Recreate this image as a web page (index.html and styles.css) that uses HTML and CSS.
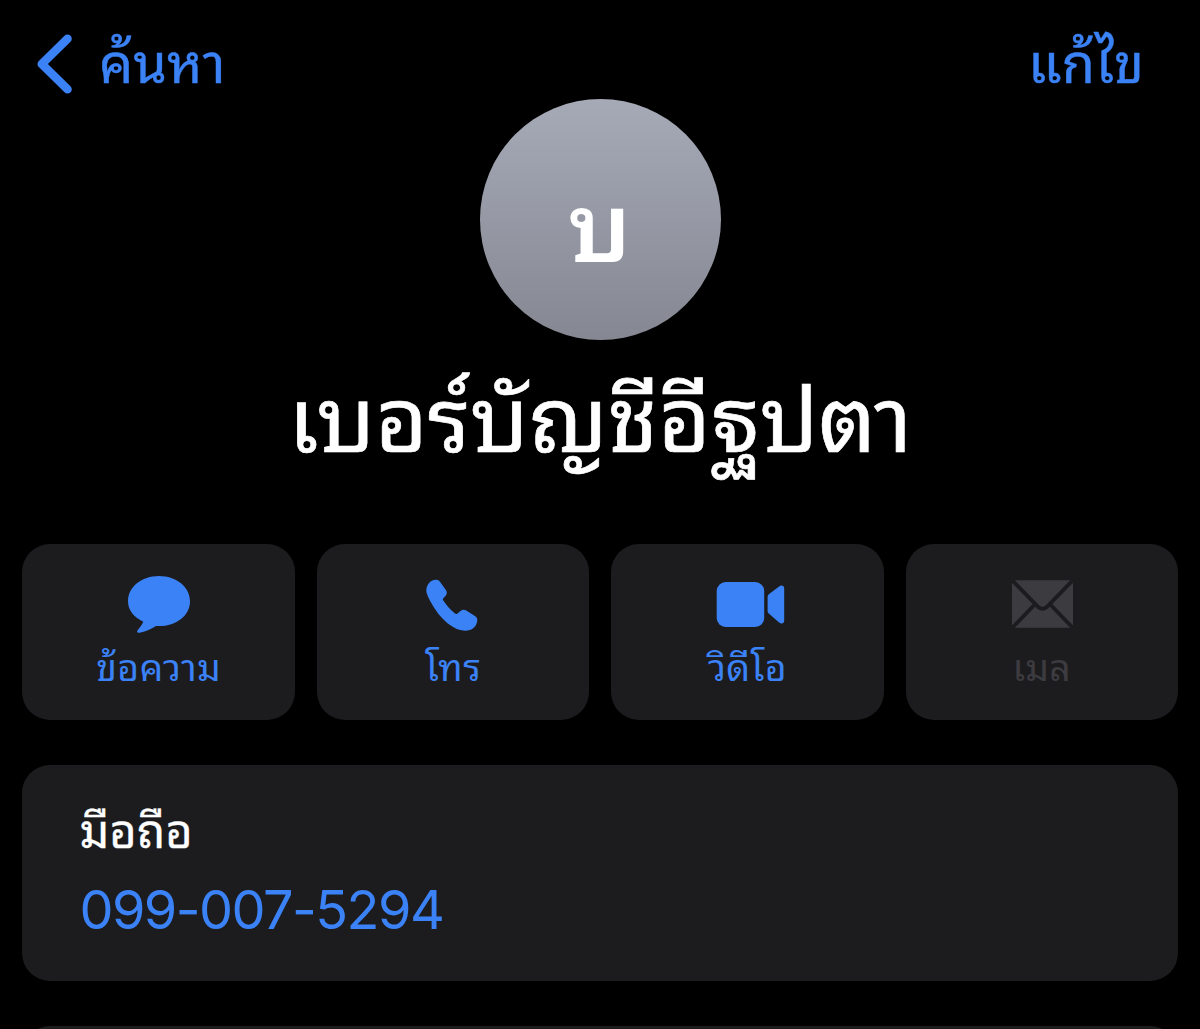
FILE: index.html
```html
<!DOCTYPE html>
<html lang="th">
<head>
<meta charset="utf-8">
<title>เบอร์บัญชีอีฐปตา</title>
<link rel="stylesheet" href="styles.css">
</head>
<body>
<main class="screen">
  <header class="nav">
    <a class="back"><svg class="chevron" viewBox="0 0 36 60"><path d="M31.500 4.800 5.800 30l25.700 25.200"/></svg><span class="back-label">ค้นหา</span></a>
    <a class="edit">แก้ไข</a>
  </header>
  <section class="profile">
    <div class="avatar"><span class="initial">บ</span></div>
    <h1 class="name"><span>เบอร์บัญชีอีฐปตา</span></h1>
  </section>
  <nav class="actions">
    <a class="action"><svg class="icon" viewBox="0 0 70 60"><path d="M35 2C17.500 2 4 13 4 27.200c0 8.500 5.500 15.800 15.300 20.500-1.300 3-3.300 5.800-5.500 8.200-1.300 1.600-.6 3.100 1.700 2.900 5.500-.6 11.500-3.500 16.500-6.700h3C52.500 52 66 41.500 66 27.200S52.500 2 35 2Z"/></svg><span class="label">ข้อความ</span></a>
    <a class="action"><svg class="icon" viewBox="0 0 70 60"><path d="M11.300 8.700C14 5.500 19.500 4.300 22 7.700L28 16.300C29.300 18.500 29 20 27.600 21.700L25.400 24.300C24.700 25.200 24.700 25.700 25.300 26.600C28.500 31.500 32.500 36 36.700 39.200C38 40.200 38.500 40.200 39.500 39.400L42.500 37C44.600 35.400 46.300 35.300 48.300 36.500L57.300 42.200C59.500 43.700 59.700 46 58.900 48.500C57.500 53.500 53.500 56.700 47.500 56.700C42 56.700 36.500 54.500 32 51C25.500 46.500 19 39 14.500 31C11 25 8.300 19.500 8.300 16.500C8.300 13.500 9.500 10.500 11.300 8.700Z"/></svg><span class="label">โทร</span></a>
    <a class="action"><svg class="icon" viewBox="0 0 70 60"><rect x="4.700" y="8" width="47.500" height="45" rx="9"/><path d="M56.800 20.300 66.800 12.700c2.800-2 5.400-1.200 5.400 2.100v31.400c0 3.300-2.600 4.200-5.400 2l-10-8.600q-1.200-1-1.200-2.600V23q0-1.700 1.200-2.700Z"/></svg><span class="label">วิดีโอ</span></a>
    <a class="action disabled"><svg class="icon" viewBox="0 0 70 60"><rect x="5" y="6.300" width="61" height="47.400" rx="4"/><path class="fold" d="M6 7.200 31.300 33q4.200 3.700 8.400 0L65 7.200M6 53l21.500-22.300M65 53 43.500 30.700"/></svg><span class="label">เมล</span></a>
  </nav>
  <section class="phone">
    <div class="phone-label"><span>มือถือ</span></div>
    <a class="number"><span>099-007-5294</span></a>
  </section>
  <section class="next"></section>
</main>
</body>
</html>
```
FILE: styles.css
```css
* { box-sizing: border-box; }
body { margin: 0; background: #000; color: #fff; font-family: Inter, "Noto Sans Thai Looped", "Noto Sans Thai", "Noto Sans", sans-serif; }
.screen { height: 1029px; overflow: hidden; }
.nav { height: 99px; padding: 34px 56px 0 36px; display: flex; justify-content: space-between; color: #3b82f6; font-size: 54px; line-height: 59px; white-space: nowrap; -webkit-text-stroke: .4px currentColor; }
.back { display: flex; gap: 27px; }
.chevron { width: 36px; height: 60px; fill: none; stroke: currentColor; stroke-width: 8.600; stroke-linecap: round; stroke-linejoin: round; }
.profile { height: 445px; display: flex; flex-direction: column; align-items: center; }
.avatar { width: 241px; height: 241px; margin-left: 1px; border-radius: 50%; background: linear-gradient(#a6aab7,#858892); display: flex; align-items: center; justify-content: center; font-size: 96px; font-weight: 600; padding: 0 2px 2px 0; }
.name { margin: 20px 0 0; height: 120px; line-height: 120px; font-size: 90.300px; font-weight: 400; white-space: nowrap; -webkit-text-stroke: .7px currentColor; }
.actions { display: grid; grid-template-columns: repeat(4, 1fr); gap: 22px; padding: 0 22px 0 22.400px; height: 176px; }
.action { background: #1c1c1e; border-radius: 28px; display: flex; flex-direction: column; align-items: center; color: #3b82f6; padding-top: 30px; font-size: 37.400px; }
.icon { width: 70px; height: 60px; fill: currentColor; overflow: visible; }
.fold { fill: none; stroke: #1c1c1e; stroke-width: 3.800; }
.label { line-height: 67px; letter-spacing: .3px; white-space: nowrap; }
.disabled { color: #3c3b40; }
.phone { margin: 45px 22px 0 22.400px; height: 216px; border-radius: 28px; background: #1c1c1e; padding: 36px 57px; }
.phone-label { font-size: 47px; line-height: 60px; -webkit-text-stroke: .3px currentColor; }
.number { display: block; font-size: 54px; line-height: 98px; letter-spacing: -1.550px; color: #3b82f6; }
.next { margin: 45px 22px 0 22.400px; height: 60px; background: #1c1c1e; border-radius: 28px; }
```
